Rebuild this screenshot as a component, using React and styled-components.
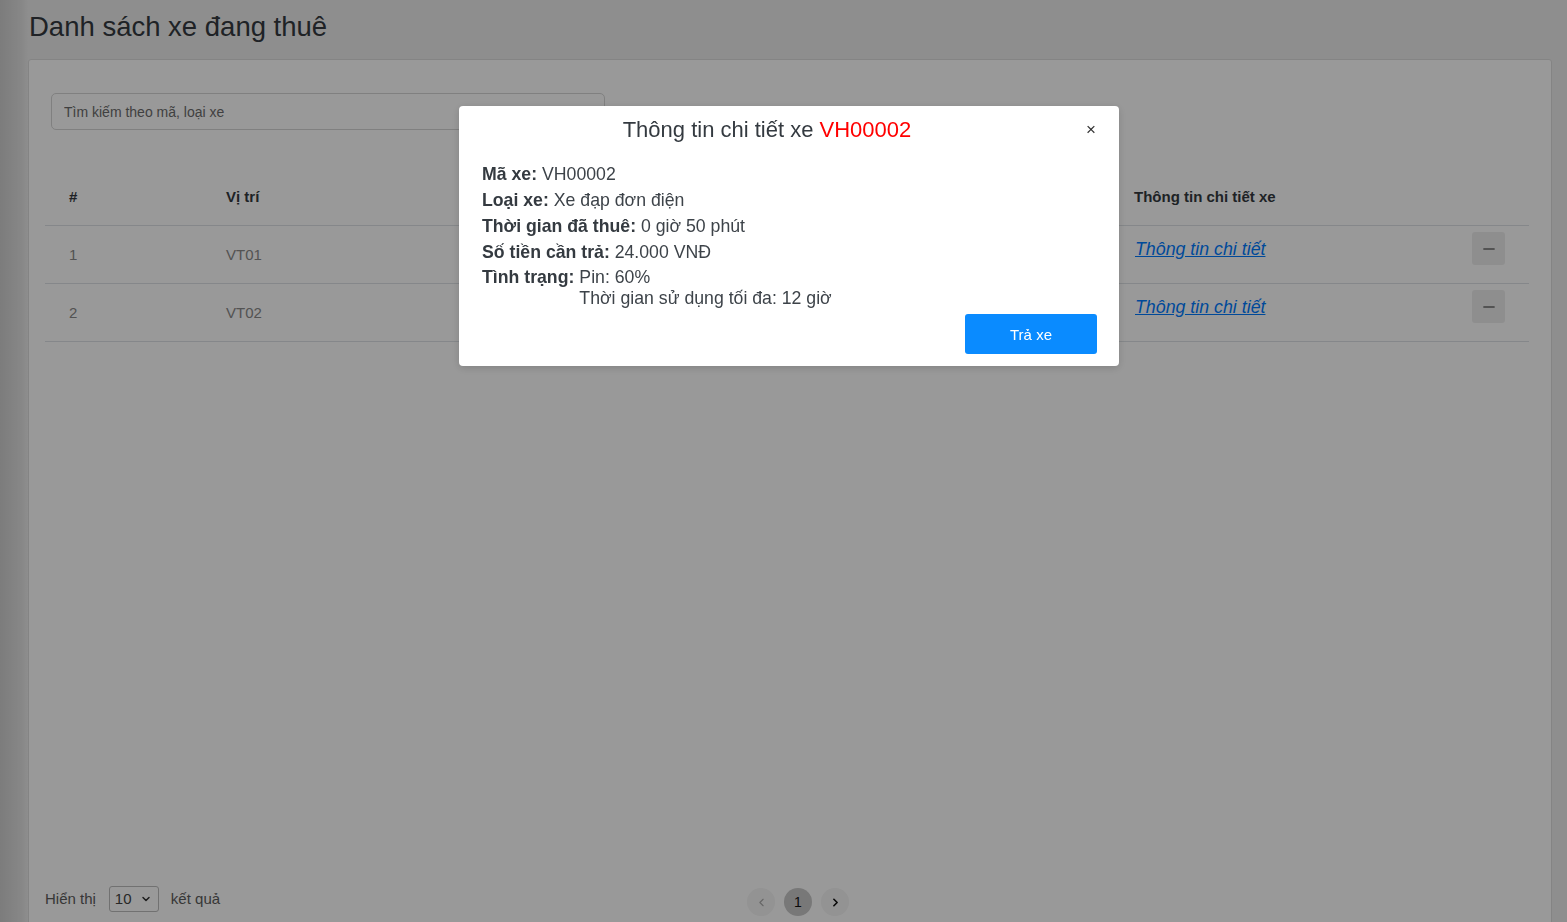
import styled, { createGlobalStyle } from "styled-components";
import { Minus, ChevronDown, ChevronLeft, ChevronRight } from "lucide-react";

const GlobalStyle = createGlobalStyle`
  * { box-sizing: border-box; }
  html, body { margin: 0; padding: 0; }
  body {
    font-family: "Liberation Sans", Arial, sans-serif;
    background: #ededed;
    color: #343a40;
  }
`;

// cột loại xe / thời gian nằm dưới modal nên để trống
const rentals = [
  { id: 1, place: "VT01" },
  { id: 2, place: "VT02" },
];

const App = () => {
  return (
    <Page>
      <GlobalStyle />
      <Title>Danh sách xe đang thuê</Title>
      <Card>
        <Search placeholder="Tìm kiếm theo mã, loại xe" />
        <Table>
          <HeadRow>
            <HeadCell>#</HeadCell>
            <HeadCell>Vị trí</HeadCell>
            <HeadCell />
            <HeadCell />
            <HeadCell>Thông tin chi tiết xe</HeadCell>
            <HeadCell />
          </HeadRow>
          {rentals.map((r) => (
            <Row key={r.id}>
              <Cell>{r.id}</Cell>
              <Cell>{r.place}</Cell>
              <Cell />
              <Cell />
              <Cell>
                <DetailLink href="#">Thông tin chi tiết</DetailLink>
              </Cell>
              <Cell>
                <ToggleButton>
                  <Minus size={18} strokeWidth={1.3} />
                </ToggleButton>
              </Cell>
            </Row>
          ))}
        </Table>
        <Spacer />
        <Footer>
          <PageSize>
            Hiển thị
            <SizeSelect>
              10
              <ChevronDown size={12} strokeWidth={3} />
            </SizeSelect>
            kết quả
          </PageSize>
          <Pager>
            <PageButton $muted>
              <ChevronLeft size={13} strokeWidth={2} />
            </PageButton>
            <PageButton $active>1</PageButton>
            <PageButton>
              <ChevronRight size={13} strokeWidth={3} />
            </PageButton>
          </Pager>
          <div />
        </Footer>
      </Card>

      <Backdrop>
        <Modal>
          <ModalHeader>
            <ModalTitle>
              Thông tin chi tiết xe <Code>VH00002</Code>
            </ModalTitle>
            <CloseButton>×</CloseButton>
          </ModalHeader>
          <ModalBody>
            <InfoRow>
              <b>Mã xe:</b> VH00002
            </InfoRow>
            <InfoRow>
              <b>Loại xe:</b> Xe đạp đơn điện
            </InfoRow>
            <InfoRow>
              <b>Thời gian đã thuê:</b> 0 giờ 50 phút
            </InfoRow>
            <InfoRow>
              <b>Số tiền cần trả:</b> 24.000 VNĐ
            </InfoRow>
            <StatusRow>
              <b>Tình trạng:</b>
              <StatusLines>
                <span>Pin: 60%</span>
                <span>Thời gian sử dụng tối đa: 12 giờ</span>
              </StatusLines>
            </StatusRow>
            <Actions>
              <ReturnButton>Trả xe</ReturnButton>
            </Actions>
          </ModalBody>
        </Modal>
      </Backdrop>
    </Page>
  );
};

const Page = styled.div`
  height: 100vh;
  overflow: hidden;
  padding: 10px 15px 0 28px;
  background: linear-gradient(to right, #cfcfcf 0, #e2e2e2 22px, #ededed 28px);
`;

const Title = styled.h1`
  margin: 0 0 15px 1px;
  font-size: 27.5px;
  line-height: 34px;
  font-weight: 400;
  color: #343a40;
`;

const Card = styled.div`
  height: 880px;
  display: flex;
  flex-direction: column;
  background: #fff;
  border: 1px solid #dcdcdc;
  border-radius: 3px;
  padding: 33px 22px 27px 16px;
`;

const Search = styled.input`
  width: 554px;
  height: 37px;
  margin-left: 6px;
  padding: 0 12px;
  border: 1px solid #d6d6d6;
  border-radius: 5px;
  font-family: inherit;
  font-size: 14px;
  color: #495057;
  &::placeholder {
    color: #6c6c6c;
  }
`;

const Table = styled.div`
  margin-top: 39px;
`;

const columns = "157px 318px 295px 295px 338px 80px";

const HeadRow = styled.div`
  display: grid;
  grid-template-columns: ${columns};
  height: 57px;
  align-items: center;
  border-bottom: 1px solid #dee2e6;
`;

const HeadCell = styled.div`
  padding: 0 24px 2px;
  font-size: 15px;
  font-weight: 700;
  color: #343a40;
  white-space: nowrap;
`;

const Row = styled.div`
  display: grid;
  grid-template-columns: ${columns};
  height: 58px;
  align-items: center;
  border-bottom: 1px solid #dee2e6;
`;

const Cell = styled.div`
  padding: 0 24px;
  font-size: 15px;
  color: #8a8a8a;
  white-space: nowrap;
`;

const DetailLink = styled.a`
  display: inline-block;
  margin: 0 0 10px 1px;
  font-size: 17.8px;
  font-style: italic;
  color: #007bff;
  text-decoration: underline;
`;

const ToggleButton = styled.button`
  display: flex;
  align-items: center;
  justify-content: center;
  width: 33px;
  height: 33px;
  margin-bottom: 12px;
  padding: 0;
  border: none;
  border-radius: 3px;
  background: #ededed;
  color: #222;
`;

const Spacer = styled.div`
  flex: 1;
`;

const Footer = styled.div`
  display: grid;
  grid-template-columns: 1fr auto 1fr;
  align-items: center;
  height: 30px;
`;

const PageSize = styled.div`
  display: flex;
  align-items: center;
  gap: 12px;
  font-size: 15px;
  color: #5c5c5c;
`;

const SizeSelect = styled.div`
  display: flex;
  align-items: center;
  justify-content: space-between;
  width: 50px;
  height: 26px;
  margin-left: 1px;
  padding: 0 6px 0 5px;
  border: 1px solid #bdbdbd;
  border-radius: 3px;
  color: #444;
  svg {
    color: #333;
  }
`;

const Pager = styled.div`
  display: flex;
  gap: 9px;
  margin: 7px 0 0 22px;
`;

const PageButton = styled.div`
  display: flex;
  align-items: center;
  justify-content: center;
  width: 28px;
  height: 28px;
  border-radius: 50%;
  font-size: 14px;
  background: ${(p) => (p.$active ? "#c8c8c8" : "#f5f5f5")};
  color: ${(p) => (p.$muted ? "#aaa" : "#111")};
`;

const Backdrop = styled.div`
  position: fixed;
  inset: 0;
  background: rgba(0, 0, 0, 0.4);
`;

const Modal = styled.div`
  width: 660px;
  margin: 106px 0 0 459px;
  background: #fff;
  border-radius: 4px;
  box-shadow: 0 2px 8px rgba(0, 0, 0, 0.15);
`;

const ModalHeader = styled.div`
  display: flex;
  align-items: center;
  padding: 11px 16px 0;
`;

const ModalTitle = styled.div`
  flex: 1;
  text-align: center;
  font-size: 22px;
  line-height: 26px;
  color: #343a40;
`;

const Code = styled.span`
  color: #ff0000;
`;

const CloseButton = styled.button`
  width: 44px;
  padding: 0 0 0 20px;
  border: none;
  background: none;
  font-family: inherit;
  font-size: 17px;
  color: #333;
`;

const ModalBody = styled.div`
  padding: 18px 22px 12px 23px;
  font-size: 17.7px;
  color: #3d4349;
  b {
    color: #343a40;
  }
`;

const InfoRow = styled.div`
  line-height: 26px;
  white-space: nowrap;
`;

const StatusRow = styled.div`
  display: flex;
  gap: 5px;
  margin-top: 2px;
  line-height: 21px;
`;

const StatusLines = styled.div`
  display: flex;
  flex-direction: column;
`;

const Actions = styled.div`
  display: flex;
  justify-content: flex-end;
  margin-top: 5px;
`;

const ReturnButton = styled.button`
  width: 132px;
  height: 40px;
  border: none;
  border-radius: 3px;
  background: #0a8bff;
  color: #fff;
  font-family: inherit;
  font-size: 15px;
`;

export default App;
